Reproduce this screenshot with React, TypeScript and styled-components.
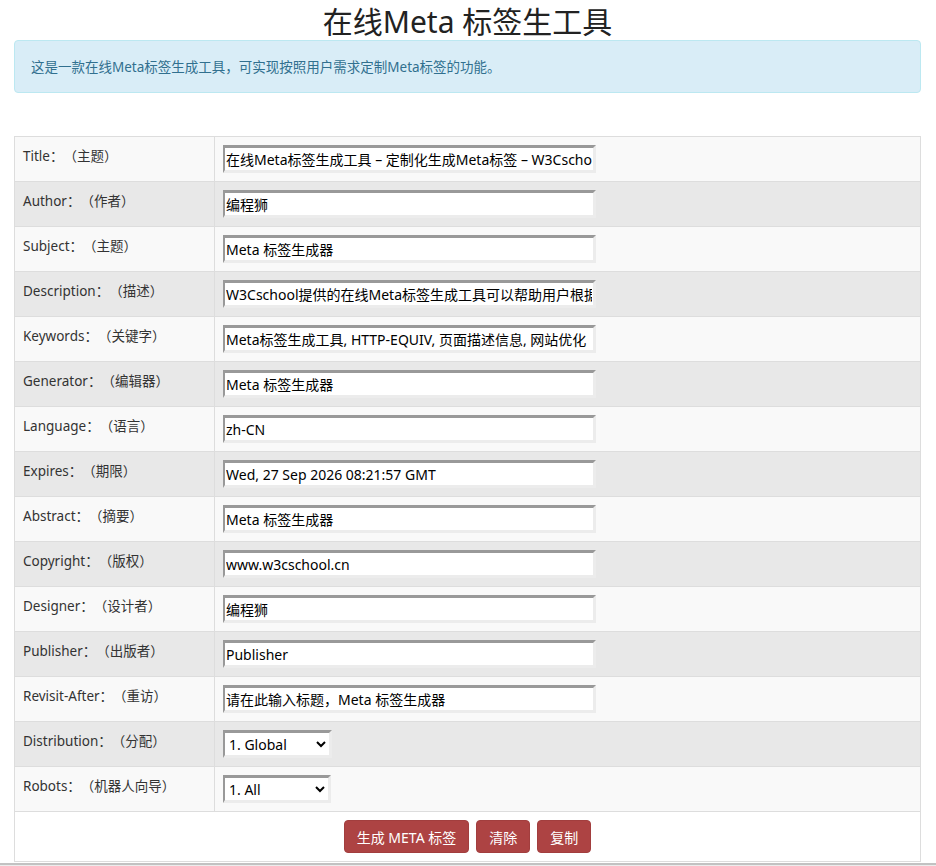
import React from 'react';
import styled, { createGlobalStyle } from 'styled-components';

const FONT = `"Noto Sans", "Noto Sans CJK SC", sans-serif`;

const GlobalStyle = createGlobalStyle`
  html, body {
    margin: 0;
    padding: 0;
    overflow: hidden;
    background: #fff;
    font-family: ${FONT};
    color: #333;
    text-spacing-trim: space-all;
  }
  input, select, button {
    text-spacing-trim: space-all;
  }
`;

const Page = styled.div`
  padding: 4px 15px 0 14px;
`;
const Heading = styled.h1`
  margin: 0;
  font-size: 30px;
  line-height: 36px;
  font-weight: normal;
  text-align: center;
  color: #222;
`;
const Alert = styled.div`
  background: #d9edf7;
  border: 1px solid #bce8f1;
  border-radius: 4px;
  color: #31708f;
  font-size: 13.5px;
  line-height: 21px;
  padding: 16px 16px 14px;
`;
const Table = styled.table`
  width: 100%;
  margin-top: 43px;
  border-collapse: collapse;
  border: 1px solid #ddd;
  font-size: 13.5px;
`;
const Row = styled.tr<{ $alt?: boolean }>`
  background: ${(props) => (props.$alt ? '#e8e8e8' : '#f9f9f9')};
  border-top: 1px solid #ddd;
`;
const LabelCell = styled.td`
  width: 183px;
  padding: 8px 8px 8px 8px;
  vertical-align: top;
  line-height: 22px;
  border-right: 1px solid #ddd;
  color: #333;
  white-space: nowrap;
`;
const FieldCell = styled.td`
  padding: 8px;
  vertical-align: top;
  height: 28px;
`;
const TextInput = styled.input`
  box-sizing: border-box;
  width: 373px;
  height: 28px;
  padding: 0 1px;
  border-style: solid;
  border-width: 3px 3px 3px 2px;
  border-color: #999 #ececec #ececec #999;
  background: #fff;
  font-family: ${FONT};
  font-size: 14px;
  color: #000;
  outline: none;
`;
const Select = styled.select<{ $w: number }>`
  box-sizing: border-box;
  width: ${(props) => props.$w}px;
  height: 28px;
  border-style: solid;
  border-width: 3px 3px 3px 2px;
  border-color: #999 #ececec #ececec #999;
  background: #fff;
  font-family: ${FONT};
  font-size: 14px;
  color: #000;
  outline: none;
`;
const ButtonRow = styled.tr`
  background: #fff;
  border-top: 1px solid #ddd;
`;
const ButtonCell = styled.td`
  padding: 8px;
`;
const Buttons = styled.div`
  display: flex;
  justify-content: center;
  gap: 7px;
`;
const Button = styled.button`
  height: 33px;
  padding: 0 12px;
  border: 1px solid #a23e3e;
  border-radius: 4px;
  background: #ad4343;
  color: #fff;
  font-family: ${FONT};
  font-size: 14px;
  cursor: pointer;
`;
const Footer = styled.div`
  margin: 1px -15px 0 -14px;
  height: 10px;
  border-top: 2px solid #c2c2c2;
  background: #ececec;
`;

const fields = [
  ['Title：（主题）', '在线Meta标签生成工具 – 定制化生成Meta标签 – W3Cschool'],
  ['Author：（作者）', '编程狮'],
  ['Subject：（主题）', 'Meta 标签生成器'],
  ['Description：（描述）', 'W3Cschool提供的在线Meta标签生成工具可以帮助用户根据需求生成Meta标签'],
  ['Keywords：（关键字）', 'Meta标签生成工具, HTTP-EQUIV, 页面描述信息, 网站优化'],
  ['Generator：（编辑器）', 'Meta 标签生成器'],
  ['Language：（语言）', 'zh-CN'],
  ['Expires：（期限）', 'Wed, 27 Sep 2026 08:21:57 GMT'],
  ['Abstract：（摘要）', 'Meta 标签生成器'],
  ['Copyright：（版权）', 'www.w3cschool.cn'],
  ['Designer：（设计者）', '编程狮'],
  ['Publisher：（出版者）', 'Publisher'],
  ['Revisit-After：（重访）', '请在此输入标题，Meta 标签生成器'],
];

const App = () => {
  return (
    <>
      <GlobalStyle />
      <Page>
        <Heading>在线Meta 标签生工具</Heading>
        <Alert>这是一款在线Meta标签生成工具，可实现按照用户需求定制Meta标签的功能。</Alert>
        <Table>
          <tbody>
            {fields.map(([label, value], index) => (
              <Row key={label} $alt={index % 2 === 1}>
                <LabelCell>{label}</LabelCell>
                <FieldCell>
                  <TextInput defaultValue={value} />
                </FieldCell>
              </Row>
            ))}
            <Row $alt>
              <LabelCell>Distribution：（分配）</LabelCell>
              <FieldCell>
                <Select $w={109} defaultValue="global">
                  <option value="global">1. Global</option>
                  <option value="local">2. Local</option>
                  <option value="iu">3. IU</option>
                </Select>
              </FieldCell>
            </Row>
            <Row>
              <LabelCell>Robots：（机器人向导）</LabelCell>
              <FieldCell>
                <Select $w={108} defaultValue="all">
                  <option value="all">1. All</option>
                  <option value="none">2. None</option>
                  <option value="index">3. Index</option>
                </Select>
              </FieldCell>
            </Row>
            <ButtonRow>
              <ButtonCell colSpan={2}>
                <Buttons>
                  <Button>生成 META 标签</Button>
                  <Button>清除</Button>
                  <Button>复制</Button>
                </Buttons>
              </ButtonCell>
            </ButtonRow>
          </tbody>
        </Table>
        <Footer />
      </Page>
    </>
  );
};

export default App;
